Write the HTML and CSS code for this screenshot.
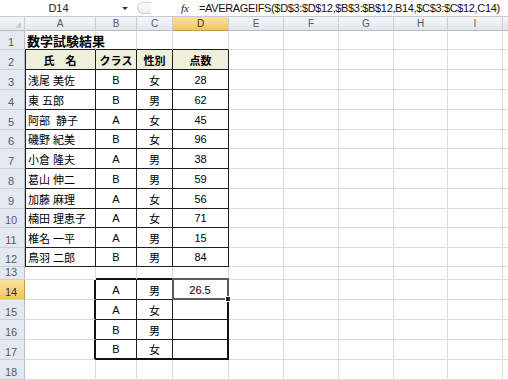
FILE: index.html
```html
<!DOCTYPE html>
<html lang="ja">
<head>
<meta charset="utf-8">
<title>数学試験結果</title>
<link rel="stylesheet" href="styles.css">
</head>
<body>
<div class="fbar">
  <div class="namebox">D14</div>
  <div class="nb-arrow"></div>
  <div class="grip"><span class="pill"></span></div>
  <div class="fx">fx</div>
  <div class="formula">=AVERAGEIFS($D$3:$D$12,$B$3:$B$12,B14,$C$3:$C$12,C14)</div>
</div>
<div class="sheet">
  <div class="corner"></div><div class="ch">A</div><div class="ch">B</div><div class="ch">C</div><div class="ch sel">D</div><div class="ch">E</div><div class="ch">F</div><div class="ch">G</div><div class="ch">H</div><div class="ch">I</div><div class="ch last"></div>

  <div class="rh">1</div><div class="c bbk title">数学試験結果</div><div class="c bbk"></div><div class="c bbk"></div><div class="c bbk"></div><div class="c"></div><div class="c"></div><div class="c"></div><div class="c"></div><div class="c"></div><div class="c last"></div>

  <div class="rh">2</div><div class="c t tl hd ctr">氏　名</div><div class="c t hd ctr">クラス</div><div class="c t hd ctr">性別</div><div class="c t hd ctr">点数</div><div class="c"></div><div class="c"></div><div class="c"></div><div class="c"></div><div class="c"></div><div class="c last"></div>

  <div class="rh">3</div><div class="c t tl">浅尾 美佐</div><div class="c t ctr">B</div><div class="c t ctr">女</div><div class="c t ctr">28</div><div class="c"></div><div class="c"></div><div class="c"></div><div class="c"></div><div class="c"></div><div class="c last"></div>

  <div class="rh">4</div><div class="c t tl">東 五郎</div><div class="c t ctr">B</div><div class="c t ctr">男</div><div class="c t ctr">62</div><div class="c"></div><div class="c"></div><div class="c"></div><div class="c"></div><div class="c"></div><div class="c last"></div>

  <div class="rh">5</div><div class="c t tl">阿部&nbsp; 静子</div><div class="c t ctr">A</div><div class="c t ctr">女</div><div class="c t ctr">45</div><div class="c"></div><div class="c"></div><div class="c"></div><div class="c"></div><div class="c"></div><div class="c last"></div>

  <div class="rh">6</div><div class="c t tl">磯野 紀美</div><div class="c t ctr">B</div><div class="c t ctr">女</div><div class="c t ctr">96</div><div class="c"></div><div class="c"></div><div class="c"></div><div class="c"></div><div class="c"></div><div class="c last"></div>

  <div class="rh">7</div><div class="c t tl">小倉 隆夫</div><div class="c t ctr">A</div><div class="c t ctr">男</div><div class="c t ctr">38</div><div class="c"></div><div class="c"></div><div class="c"></div><div class="c"></div><div class="c"></div><div class="c last"></div>

  <div class="rh">8</div><div class="c t tl">葛山 伸二</div><div class="c t ctr">B</div><div class="c t ctr">男</div><div class="c t ctr">59</div><div class="c"></div><div class="c"></div><div class="c"></div><div class="c"></div><div class="c"></div><div class="c last"></div>

  <div class="rh">9</div><div class="c t tl">加藤 麻理</div><div class="c t ctr">A</div><div class="c t ctr">女</div><div class="c t ctr">56</div><div class="c"></div><div class="c"></div><div class="c"></div><div class="c"></div><div class="c"></div><div class="c last"></div>

  <div class="rh">10</div><div class="c t tl">楠田 理恵子</div><div class="c t ctr">A</div><div class="c t ctr">女</div><div class="c t ctr">71</div><div class="c"></div><div class="c"></div><div class="c"></div><div class="c"></div><div class="c"></div><div class="c last"></div>

  <div class="rh">11</div><div class="c t tl">椎名 一平</div><div class="c t ctr">A</div><div class="c t ctr">男</div><div class="c t ctr">15</div><div class="c"></div><div class="c"></div><div class="c"></div><div class="c"></div><div class="c"></div><div class="c last"></div>

  <div class="rh">12</div><div class="c t tl">鳥羽 二郎</div><div class="c t ctr">B</div><div class="c t ctr">男</div><div class="c t ctr">84</div><div class="c"></div><div class="c"></div><div class="c"></div><div class="c"></div><div class="c"></div><div class="c last"></div>

  <div class="rh">13</div><div class="c"></div><div class="c bb2"></div><div class="c bb2"></div><div class="c bb2"></div><div class="c"></div><div class="c"></div><div class="c"></div><div class="c"></div><div class="c"></div><div class="c last"></div>

  <div class="rh sel">14</div><div class="c br2"></div><div class="c t ctr">A</div><div class="c t ctr">男</div><div class="c t tr2 ctr active">26.5<span class="cursor"><span class="handle"></span></span></div><div class="c"></div><div class="c"></div><div class="c"></div><div class="c"></div><div class="c"></div><div class="c last"></div>

  <div class="rh">15</div><div class="c br2"></div><div class="c t ctr">A</div><div class="c t ctr">女</div><div class="c t tr2"></div><div class="c"></div><div class="c"></div><div class="c"></div><div class="c"></div><div class="c"></div><div class="c last"></div>

  <div class="rh">16</div><div class="c br2"></div><div class="c t ctr">B</div><div class="c t ctr">男</div><div class="c t tr2"></div><div class="c"></div><div class="c"></div><div class="c"></div><div class="c"></div><div class="c"></div><div class="c last"></div>

  <div class="rh">17</div><div class="c br2"></div><div class="c t tb2 ctr">B</div><div class="c t tb2 ctr">女</div><div class="c t tr2 tb2"></div><div class="c"></div><div class="c"></div><div class="c"></div><div class="c"></div><div class="c"></div><div class="c last"></div>

  <div class="rh">18</div><div class="c"></div><div class="c"></div><div class="c"></div><div class="c"></div><div class="c"></div><div class="c"></div><div class="c"></div><div class="c"></div><div class="c"></div><div class="c last"></div>
</div>
</body>
</html>
```

FILE: styles.css
```css
* { box-sizing: border-box; }
html, body { margin: 0; padding: 0; }
body {
  width: 508px;
  height: 380px;
  overflow: hidden;
  background: #fff;
  color: #000;
  font-family: "Liberation Sans", "Noto Sans CJK JP", sans-serif;
}

/* formula bar */
.fbar {
  display: flex;
  align-items: center;
  height: 17px;
  border-bottom: 1px solid #c3cad3;
  background: #fff;
  font-size: 11px;
}
.namebox {
  width: 117px;
  height: 100%;
  display: flex;
  align-items: center;
  justify-content: center;
  color: #222;
}
.nb-arrow {
  width: 16px;
  display: flex;
  justify-content: center;
}
.nb-arrow::before {
  content: "";
  border-left: 3px solid transparent;
  border-right: 3px solid transparent;
  border-top: 3px solid #333;
}
.grip {
  width: 45px;
  height: 100%;
  display: flex;
  align-items: center;
}
.pill {
  width: 14px;
  height: 12px;
  margin-left: 4px;
  border: 1px solid #cdd2d8;
  border-right: none;
  border-radius: 6px 0 0 6px;
  background: linear-gradient(#fbfbfc, #eceef1);
}
.fx {
  width: 17px;
  padding-left: 3px;
  font-family: "Liberation Serif", serif;
  font-style: italic;
  font-size: 11px;
  color: #222;
}
.formula {
  flex: 1;
  padding-left: 4px;
  white-space: nowrap;
  letter-spacing: -0.35px;
  color: #111;
}

/* sheet grid */
.sheet {
  display: grid;
  grid-template-columns: 25px 71px 41px 36px 56px 55px 55px 55px 54px 55px 5px;
  grid-template-rows: 14px 19px 20px 20px 20px 20px 19px 20px 20px 20px 19px 20px 19px 13px 20px 20px 20px 20px 20px;
}
.corner {
  position: relative;
  background: linear-gradient(#f4f6f9, #e3e7ed);
  border-right: 1px solid #c9cfd7;
  border-bottom: 1px solid #b2bcc8;
}
.corner::after {
  content: "";
  position: absolute;
  right: 3px;
  bottom: 2px;
  border-left: 6px solid transparent;
  border-bottom: 6px solid #c5ccd5;
}
.ch {
  background: linear-gradient(#f4f6f9, #e2e6ec);
  border-right: 1px solid #c9cfd7;
  border-bottom: 1px solid #b2bcc8;
  display: flex;
  align-items: center;
  justify-content: center;
  font-size: 10px;
  color: #4f5b6a;
}
.ch.sel {
  background: linear-gradient(#fae1a0, #f4c55f);
  border-bottom-color: #c49a45;
  color: #333;
}
.ch.last { border-right: none; }
.rh {
  background: #e4e9f0;
  border-right: 1px solid #b6c0cc;
  border-bottom: 1px solid #c9d0d9;
  display: flex;
  align-items: flex-end;
  justify-content: center;
  padding: 0 2px 1px 0;
  font-size: 11px;
  line-height: 1;
  color: #4f5b6a;
}
.rh.sel {
  background: linear-gradient(#fae1a0, #f4c55f);
  border-right-color: #c49a45;
  color: #333;
}

/* cells */
.c {
  border-right: 1px solid #dadcdd;
  border-bottom: 1px solid #dadcdd;
  display: flex;
  align-items: center;
  padding: 0 3px;
  font-size: 11px;
  white-space: nowrap;
  min-width: 0;
}
.c.last { border-right: none; }
.ctr { justify-content: center; }
.title {
  font-size: 13px;
  font-weight: bold;
  padding-left: 2px;
}
.bbk { border-bottom-color: #1e1e1e; }
.t {
  border-right-color: #1e1e1e;
  border-bottom-color: #1e1e1e;
}
.tl { box-shadow: inset 1px 0 0 #1e1e1e; }
.hd {
  background: #eef0dc;
  font-weight: bold;
}
.bb2 { border-bottom: 2px solid #111; }
.br2 { border-right: 2px solid #111; }
.tr2 { border-right: 2px solid #111; }
.tb2 { border-bottom: 2px solid #111; }

/* active cell */
.active { position: relative; }
.cursor {
  position: absolute;
  left: -1px;
  top: -2px;
  right: -2px;
  bottom: -1px;
  border: 2px solid #5a5a5a;
  pointer-events: none;
}
.handle {
  position: absolute;
  right: -4px;
  bottom: -4px;
  width: 6px;
  height: 6px;
  background: #222;
  border: 1px solid #fff;
}
```
